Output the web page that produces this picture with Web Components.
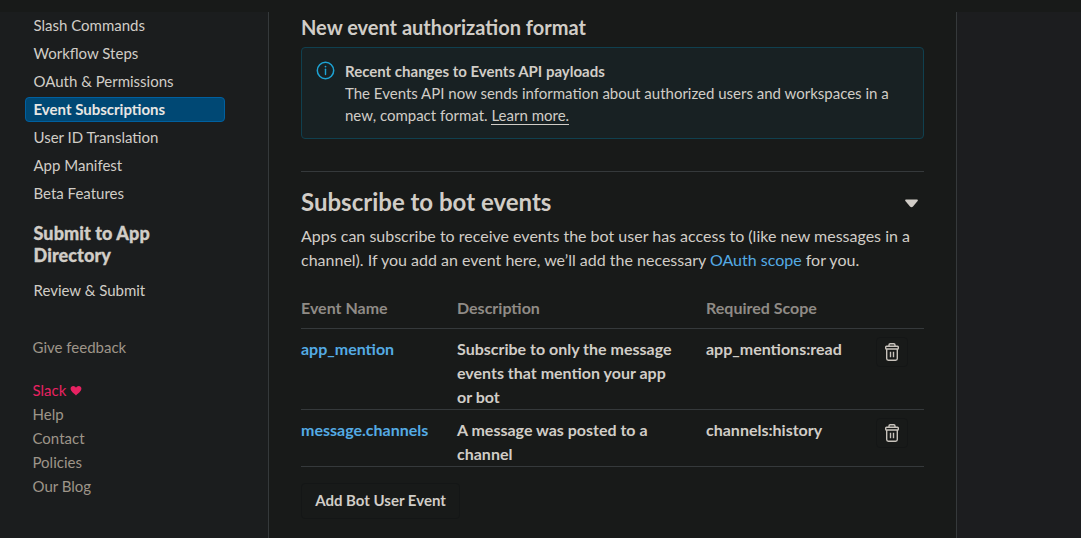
<!DOCTYPE html>
<html lang="en">
<head>
<meta charset="utf-8">
<title>Event Subscriptions</title>
<style>
html, body { margin: 0; height: 100%; overflow: hidden; background: #181a19; }
body { font-family: Lato, "Liberation Sans", sans-serif; font-size: 15px; line-height: 24px; color: #d1cdc7; }
</style>
</head>
<body>
<app-shell>
  <side-bar slot="side">
    <nav-item>Slash Commands</nav-item>
    <nav-item>Workflow Steps</nav-item>
    <nav-item>OAuth &amp; Permissions</nav-item>
    <nav-item active>Event Subscriptions</nav-item>
    <nav-item>User ID Translation</nav-item>
    <nav-item>App Manifest</nav-item>
    <nav-item>Beta Features</nav-item>
    <nav-heading>Submit to App Directory</nav-heading>
    <nav-item>Review &amp; Submit</nav-item>
    <foot-links slot="foot"></foot-links>
  </side-bar>
  <section-title>New event authorization format</section-title>
  <info-alert>
    <span slot="title">Recent changes to Events API payloads</span>
    <span>The Events API now sends information about authorized users and workspaces in a</span>
    <span>new, compact format. </span><under-link>Learn more.</under-link>
  </info-alert>
  <bot-events>
    <event-row name="app_mention" scope="app_mentions:read">Subscribe to only the message events that mention your app or bot</event-row>
    <event-row name="message.channels" scope="channels:history">A message was posted to a channel</event-row>
  </bot-events>
</app-shell>
<script>
const define = (name, html) => {
  const template = document.createElement('template');
  template.innerHTML = html;
  customElements.define(name, class extends HTMLElement {
    constructor() {
      super();
      this.attachShadow({ mode: 'open' }).append(template.content.cloneNode(true));
    }
    connectedCallback() {
      this.shadowRoot.querySelectorAll('[data-attr]').forEach(el => {
        el.textContent = this.getAttribute(el.dataset.attr);
      });
    }
  });
};

define('app-shell', `
<style>
:host { display: grid; grid-template-rows: 12px 526px; height: 538px; }
header { background: #181a19; }
.cols { display: grid; grid-template-columns: 268px 689px 1fr; }
.side { background: #1b1d1e; }
main { box-sizing: border-box; border: solid #35393b; border-width: 0 1px; padding: 0 32px; background: #181a19; overflow: hidden; }
aside { background: #1c1d1f; }
</style>
<header></header>
<div class="cols"><div class="side"><slot name="side"></slot></div><main><slot></slot></main><aside></aside></div>`);

define('side-bar', `
<style>
:host { display: block; padding: 1px 43px 0 25px; }
nav { display: flex; flex-direction: column; gap: 3px; }
</style>
<nav><slot></slot></nav><slot name="foot"></slot>`);

define('nav-item', `
<style>
:host { display: block; box-sizing: border-box; height: 25px; padding: 0 7.5px; border: 1px solid transparent; border-radius: 4px; line-height: 23px; color: #d1cdc7; }
:host([active]) { background: #004874; border-color: #0060a0; color: #e8e6e3; font-weight: 700; }
</style><slot></slot>`);

define('nav-heading', `
<style>
:host { display: block; padding: 13px 8.5px 9px; width: 140px; font-size: 18px; line-height: 22px; font-weight: 900; letter-spacing: .09px; -webkit-text-stroke: .3px currentColor; }
</style><slot></slot>`);

define('foot-links', `
<style>
:host { display: flex; flex-direction: column; padding: 32px 7.5px 0; color: #9e9589; }
.feedback { margin-bottom: 19px; }
.slack { display: flex; align-items: center; gap: 4px; color: #e72262; }
svg { margin-top: 1px; }
</style>
<span class="feedback">Give feedback</span>
<span class="slack">Slack <svg width="12" height="11" viewBox="0 0 12 11"><path fill="currentColor" d="M6 10.4C3.7 8.4.6 6.3.6 3.6.6 1.9 1.8.9 3.2.9 4.4.9 5.5 1.6 6 2.7 6.5 1.6 7.6.9 8.8.9c1.4 0 2.6 1 2.6 2.7C11.4 6.3 8.3 8.4 6 10.4z"/></svg></span>
<span>Help</span><span>Contact</span><span>Policies</span><span>Our Blog</span>`);

define('section-title', `
<style>:host { display: block; padding-top: 3px; margin-bottom: 8px; font-size: 20px; line-height: 24px; font-weight: 700; }</style><slot></slot>`);

define('under-link', `
<style>:host { display: inline; border-bottom: 1px solid #d1cdc7; }</style><slot></slot>`);

define('info-alert', `
<style>
:host { display: flex; box-sizing: border-box; height: 92px; padding: 12px 24px 0 14px; gap: 10px; border: 1px solid #10404f; border-radius: 4px; background: #182123; line-height: 22px; }
svg { flex: none; margin-top: 1px; }
b { display: block; }
</style>
<svg width="19" height="19" viewBox="0 0 19 19" fill="none" stroke="#1da3d4"><circle cx="9.5" cy="9.5" r="8.2" stroke-width="1.5"/><path d="M9.5 8.2v5.3" stroke-width="1.4" stroke-linecap="round"/><circle cx="9.5" cy="5.6" r=".9" fill="#1da3d4" stroke="none"/></svg>
<div><b><slot name="title"></slot></b><slot></slot></div>`);

define('trash-button', `
<style>
:host { box-sizing: border-box; display: flex; justify-content: center; align-items: center; width: 32px; height: 30px; border: 1px solid #141616; border-radius: 4px; }
</style>
<svg width="16" height="20" viewBox="0 0 16 20" fill="none" stroke="#c8c3bc" stroke-width="1.4" stroke-linejoin="round"><path d="M5 4V2.9Q5 1.7 6.2 1.7h3.6Q11 1.7 11 2.9V4"/><rect x="1.7" y="4.2" width="12.6" height="2.8" rx=".8"/><path d="M2.7 7v9.6q0 1.7 1.6 1.7h7.4q1.6 0 1.6-1.7V7M6.5 9.7v5.6M9.5 9.7v5.6"/></svg>`);

define('event-row', `
<style>
:host { display: grid; grid-template-columns: 156px 249px 170px 1fr; padding-top: 8px; border-bottom: 1px solid #35393b; font-size: 16px; line-height: 24px; font-weight: 700; }
.name { color: #54abe4; }
.desc { padding-right: 24px; }
</style>
<span class="name" data-attr="name"></span><span class="desc"><slot></slot></span><span data-attr="scope"></span><trash-button></trash-button>`);

define('bot-events', `
<style>
:host { display: block; margin-top: 32px; border-top: 1px solid #35393b; font-size: 16px; }
.head { display: flex; justify-content: space-between; align-items: center; padding: 14px 6px 0 0; }
h2 { margin: 0; font-size: 24px; line-height: 32px; font-weight: 700; }
.head svg { margin-top: 2px; }
p { margin: 6px 0 0; }
a { color: #54abe4; }
.thead { display: grid; grid-template-columns: 156px 249px 1fr; margin-top: 24px; padding-bottom: 8px; border-bottom: 1px solid #35393b; font-weight: 700; color: #8f8b86; }
button { display: block; box-sizing: border-box; width: 159px; height: 36px; margin-top: 16px; padding: 0 0 2px; border: 1px solid #141616; border-radius: 4px; background: #181a19; color: #d1cdc7; font: 700 15px Lato, sans-serif; }
</style>
<div class="head"><h2>Subscribe to bot events</h2><svg width="13" height="9" viewBox="0 0 13 9"><path fill="#d1cdc7" d="M1 .5h11q1.4.2.6 1.4L8 7.5q-1.5 1.5-3 0L.4 1.9Q-.4.7 1 .5z"/></svg></div>
<p><span>Apps can subscribe to receive events the bot user has access to (like new messages in a</span> <span>channel). If you add an event here, we’ll add the necessary </span><a>OAuth scope</a><span> for you.</span></p>
<div class="thead"><span>Event Name</span><span>Description</span><span>Required Scope</span></div>
<slot></slot>
<button>Add Bot User Event</button>`);
</script>
</body>
</html>
